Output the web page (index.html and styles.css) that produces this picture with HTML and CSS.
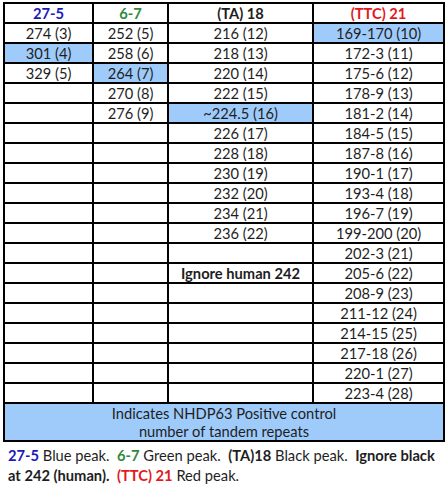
FILE: index.html
```html
<!DOCTYPE html>
<html>
<head>
<meta charset="utf-8">
<link rel="stylesheet" href="styles.css">
</head>
<body>
<table class="grid">
<colgroup><col class="c1"><col class="c2"><col class="c3"><col class="c4"></colgroup>
<tr class="head"><th class="blue-t">27-5</th><th class="green-t">6-7</th><th>(TA) 18</th><th class="red-t">(TTC) 21</th></tr>
<tr><td>274 (3)</td><td>252 (5)</td><td>216 (12)</td><td class="hl">169-170 (10)</td></tr>
<tr><td class="hl">301 (4)</td><td>258 (6)</td><td>218 (13)</td><td>172-3 (11)</td></tr>
<tr><td>329 (5)</td><td class="hl">264 (7)</td><td>220 (14)</td><td>175-6 (12)</td></tr>
<tr><td></td><td>270 (8)</td><td>222 (15)</td><td>178-9 (13)</td></tr>
<tr><td></td><td>276 (9)</td><td class="hl">~224.5 (16)</td><td>181-2 (14)</td></tr>
<tr><td></td><td></td><td>226 (17)</td><td>184-5 (15)</td></tr>
<tr><td></td><td></td><td>228 (18)</td><td>187-8 (16)</td></tr>
<tr><td></td><td></td><td>230 (19)</td><td>190-1 (17)</td></tr>
<tr><td></td><td></td><td>232 (20)</td><td>193-4 (18)</td></tr>
<tr><td></td><td></td><td>234 (21)</td><td>196-7 (19)</td></tr>
<tr><td></td><td></td><td>236 (22)</td><td>199-200 (20)</td></tr>
<tr><td></td><td></td><td></td><td>202-3 (21)</td></tr>
<tr><td></td><td></td><td class="bold">Ignore human 242</td><td>205-6 (22)</td></tr>
<tr><td></td><td></td><td></td><td>208-9 (23)</td></tr>
<tr><td></td><td></td><td></td><td>211-12 (24)</td></tr>
<tr><td></td><td></td><td></td><td>214-15 (25)</td></tr>
<tr><td></td><td></td><td></td><td>217-18 (26)</td></tr>
<tr><td></td><td></td><td></td><td>220-1 (27)</td></tr>
<tr><td></td><td></td><td></td><td>223-4 (28)</td></tr>
<tr class="foot"><td colspan="4" class="hl">Indicates NHDP63 Positive control<br>number of tandem repeats</td></tr>
</table>
<p class="legend"><b class="blue-t">27-5</b> Blue peak.&nbsp; <b class="green-t">6-7</b> Green peak.&nbsp; <b>(TA)18</b> Black peak.&nbsp; <b>Ignore black at 242 (human).</b>&nbsp; <b class="red-t">(TTC) 21</b> Red peak.</p>
</body>
</html>
```
FILE: styles.css
```css
html, body { margin: 0; padding: 0; background: #fff; }
body {
  padding: 2px 3px 0 3px;
  font-family: Lato, "Open Sans", sans-serif;
  font-size: 14.7px;
  color: #1e1e1e;
}
.grid {
  border-collapse: collapse;
  table-layout: fixed;
  width: 440px;
}
.c1 { width: 89px; }
.c2 { width: 75px; }
.c3 { width: 145px; }
.c4 { width: 131px; }
.grid th, .grid td {
  border: 2px solid #000;
  padding: 0;
  height: 18px;
  line-height: 18px;
  text-align: center;
  white-space: nowrap;
}
.grid th { font-weight: bold; }
.hl { background: #9fcbfa; }
.bold { font-weight: bold; }
.blue-t { color: #1a1ab8; }
.green-t { color: #2f8a3c; }
.red-t { color: #e3191c; }
.grid .foot td { height: 35px; line-height: 18px; }
.legend {
  margin: 3px 0 0 5px;
  line-height: 20px;
  width: 438px;
}
```
